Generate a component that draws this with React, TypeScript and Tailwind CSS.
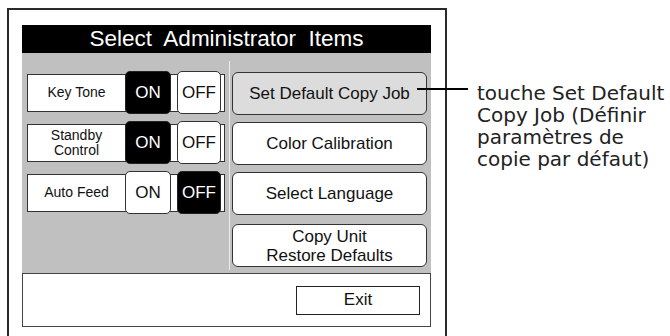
import React from 'react';

type Toggle = { label: string[]; on: boolean };

const toggles: Toggle[] = [
  { label: ['Key Tone'], on: true },
  { label: ['Standby', 'Control'], on: true },
  { label: ['Auto Feed'], on: false },
];

const menuItems = [
  { lines: ['Set Default Copy Job'], selected: true },
  { lines: ['Color Calibration'], selected: false },
  { lines: ['Select Language'], selected: false },
  { lines: ['Copy Unit', 'Restore Defaults'], selected: false },
];

function SwitchButton({ text, active }: { text: string; active: boolean }) {
  return (
    <div
      className={
        active
          ? 'h-[43px] flex items-center justify-center rounded-[5px] border border-[#222] bg-black text-white text-[17px]'
          : 'h-[43px] flex items-center justify-center rounded-[5px] border border-[#333] bg-white text-[#111] text-[17px]'
      }
    >
      {text}
    </div>
  );
}

function ToggleRow({ item }: { item: Toggle }) {
  return (
    <div className="h-[43px] flex items-center">
      <div className="w-[198px] h-[38px] flex items-center bg-white border border-[#333]">
        <div className="w-[97px] text-center text-[14px] leading-[15px] text-[#111]">
          {item.label.map((l) => (
            <div key={l}>{l}</div>
          ))}
        </div>
        <div className="w-[46px]">
          <SwitchButton text="ON" active={item.on} />
        </div>
        <div className="w-[44px] ml-[6px]">
          <SwitchButton text="OFF" active={!item.on} />
        </div>
      </div>
    </div>
  );
}

export default function App() {
  return (
    <div
      className="w-[670px] h-[336px] bg-white flex overflow-hidden relative"
      style={{ fontFamily: '"Liberation Sans", Arial, sans-serif' }}
    >
      {/* device panel frame */}
      <div className="ml-[7px] mt-[8px] w-[440px] h-[340px] border-2 border-b-0 border-[#2a2a2a] pt-[15px] pl-[13px] pr-[14px] shrink-0">
        <div className="h-[28px] bg-black text-white text-[22.5px] flex items-center justify-center whitespace-pre">
          {'Select  Administrator  Items'}
        </div>

        <div className="h-[220px] bg-[#c0c0c0] flex pt-[18px] pl-[5px]">
          <div className="w-[198px] flex flex-col gap-[7px]">
            {toggles.map((t) => (
              <ToggleRow key={t.label.join(' ')} item={t} />
            ))}
          </div>

          <div className="w-px bg-[#ececec] ml-[4px] -mt-[10px] mb-[3px]" />

          <div className="w-[195px] ml-[2px] pt-[1px] flex flex-col gap-[7px]">
            {menuItems.map((m, i) => (
              <div
                key={m.lines[0]}
                className={
                  (m.selected ? 'bg-[#dcdcdc] ' : 'bg-white ') +
                  (i === 3 ? 'mt-[2px] ' : '') +
                  'h-[43px] rounded-[6px] border border-[#333] flex flex-col items-center justify-center text-[17px] leading-[19px] text-[#111]'
                }
              >
                {m.lines.map((l) => (
                  <div key={l}>{l}</div>
                ))}
              </div>
            ))}
          </div>
        </div>

        <div className="h-[54px] bg-white border border-[#444] flex items-center justify-end pr-[10px]">
          <div className="w-[124px] h-[29px] border border-[#222] flex items-center justify-center text-[17px] text-[#111]">
            Exit
          </div>
        </div>
      </div>

      {/* leader line and caption */}
      <div className="absolute left-[417px] top-[88px] w-[51px] h-[2px] bg-black" />
      <div
        className="absolute left-[477px] top-[82px] text-[20px] leading-[22px] text-[#222] whitespace-nowrap"
        style={{ fontFamily: '"DejaVu Sans", sans-serif' }}
      >
        <div>touche Set Default</div>
        <div>Copy Job (Définir</div>
        <div>paramètres de</div>
        <div>copie par défaut)</div>
      </div>
    </div>
  );
}
